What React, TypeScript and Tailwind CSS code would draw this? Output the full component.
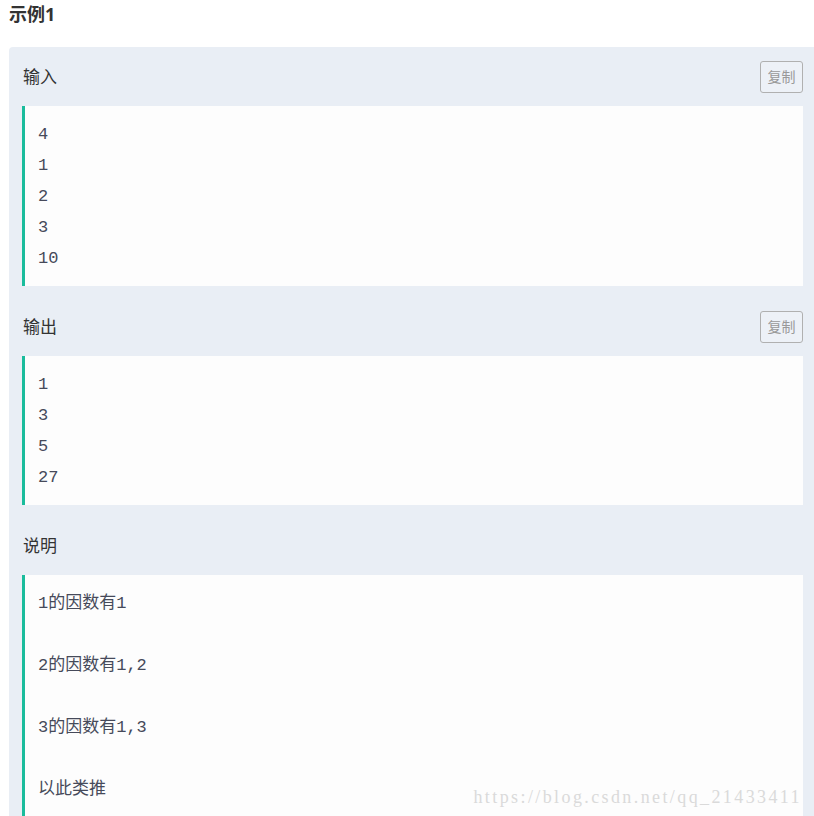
import React from 'react'

const mono = { fontFamily: '"Liberation Mono", "Noto Sans CJK SC", monospace' }

const sections = [
  { title: '输入', lines: ['4', '1', '2', '3', '10'], copy: true },
  { title: '输出', lines: ['1', '3', '5', '27'], copy: true },
  {
    title: '说明',
    lines: ['1的因数有1', '', '2的因数有1,2', '', '3的因数有1,3', '', '以此类推'],
    copy: false,
  },
]

function Section({ title, lines, copy }: { title: string; lines: string[]; copy: boolean }) {
  return (
    <div className="mb-[11px] last:mb-0">
      <div className="flex h-[59px] items-center justify-between pl-[14px]">
        <span className="text-[17px] text-[#333]">{title}</span>
        {copy && (
          <button className="flex h-[32px] w-[43px] items-center justify-center rounded-[3px] border border-[#b0b0b0] bg-[#edf1f7] text-[14px] text-[#999]">
            复制
          </button>
        )}
      </div>
      <div
        className="ml-[13px] border-l-[3px] border-[#1abc9c] bg-[#fdfdfd] pl-[13px] pt-[13px] pb-[12px] text-[17px] leading-[31px] text-[#464a5a]"
        style={mono}
      >
        {lines.map((l, i) => (
          <div key={i} className="h-[31px] whitespace-pre">
            {l}
          </div>
        ))}
      </div>
    </div>
  )
}

export default function App() {
  return (
    <div
      className="relative h-[816px] overflow-hidden bg-white"
      style={{ fontFamily: '"Noto Sans", "Noto Sans CJK SC", sans-serif' }}
    >
      <h3 className="pl-[9px] pt-[2px] text-[18px] font-bold leading-[24px] text-[#333]">示例1</h3>
      <div className="ml-[9px] mt-[21px] rounded-tl-[4px] bg-[#e9eef5] pr-[11px]">
        {sections.map((s) => (
          <Section key={s.title} {...s} />
        ))}
      </div>
      {/* csdn watermark */}
      <div className="absolute right-[12px] top-[784px] font-['Liberation_Serif',serif] text-[18px] tracking-[2.4px] text-[#dadada]">
        https://blog.csdn.net/qq_21433411
      </div>
    </div>
  )
}
